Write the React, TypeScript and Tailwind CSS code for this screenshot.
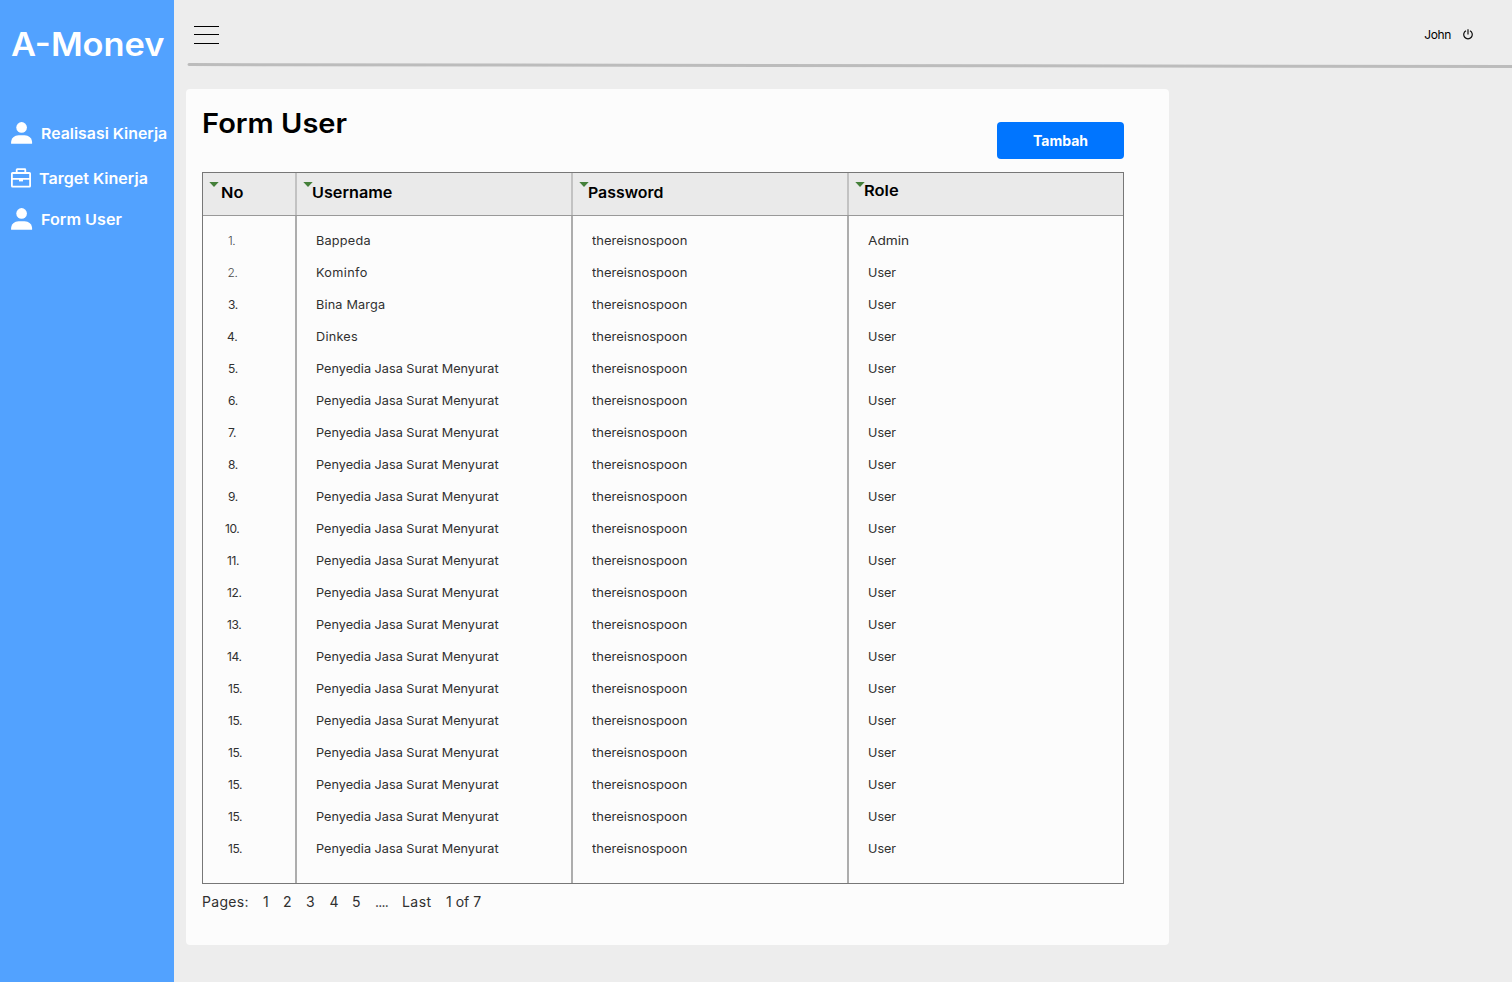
type Row = { no: string; noClass: string; username: string; nameClass: string; role: string };

const OFFICE = "Penyedia Jasa Surat Menyurat";
const DARK = "text-[#303030] font-[440]";
const LIGHT = "text-[#4a4a4a] font-[330]";

const rows: Row[] = [
  { no: "1.", noClass: `pl-[25px] tracking-[-0.5px] ${LIGHT}`, username: "Bappeda", nameClass: "tracking-[0.2px]", role: "Admin" },
  { no: "2.", noClass: `pl-[24.5px] tracking-[-0.3px] ${LIGHT}`, username: "Kominfo", nameClass: "tracking-[0.32px]", role: "User" },
  { no: "3.", noClass: `pl-[25px] tracking-[-0.3px] ${DARK}`, username: "Bina Marga", nameClass: "tracking-[0.15px]", role: "User" },
  { no: "4.", noClass: `pl-[24px] tracking-[-0.2px] ${DARK}`, username: "Dinkes", nameClass: "tracking-[0.22px]", role: "User" },
  ...["5.", "6.", "7.", "8.", "9."].map((no) => ({
    no,
    noClass: `pl-[25px] tracking-[-0.3px] ${DARK}`,
    username: OFFICE,
    nameClass: "tracking-[0]",
    role: "User",
  })),
  ...["10.", "11.", "12.", "13.", "14."].map((no) => ({
    no,
    noClass: `${no === "10." ? "pl-[22px]" : "pl-[24px]"} tracking-[-0.4px] ${DARK}`,
    username: OFFICE,
    nameClass: "tracking-[0]",
    role: "User",
  })),
  ...Array.from({ length: 6 }, () => ({
    no: "15.",
    noClass: `pl-[25px] tracking-[-0.4px] ${DARK}`,
    username: OFFICE,
    nameClass: "tracking-[0]",
    role: "User",
  })),
];

function PersonIcon() {
  return (
    <svg width="22" height="22" viewBox="0 0 22 22" fill="#fff" className="shrink-0">
      <circle cx="10.6" cy="5.4" r="5.3" />
      <path d="M0.1 21.8v-1.4c0-4.1 3.4-7.2 7.6-7.2h5.8c4.2 0 7.6 3.1 7.6 7.2v1.4z" />
    </svg>
  );
}

function BriefcaseIcon() {
  return (
    <svg width="20" height="20" viewBox="0 0 20 20" fill="none" stroke="#fff" strokeWidth="1.8" className="shrink-0">
      <rect x="0.9" y="5" width="18.2" height="13.7" rx="0.6" />
      <path d="M5.7 4.8V1.7q0-.5.5-.5h7.6q.5 0 .5.5v3.1M0.9 10.8h18.2" />
      <path d="M8 10.8h4v2.6H8z" fill="#fff" stroke="none" />
    </svg>
  );
}

function PowerIcon() {
  return (
    <svg width="10" height="11" viewBox="0 0 10 11" fill="none" stroke="#111" strokeWidth="1.2" className="-mt-[1px] ml-[12px]">
      <path d="M3 1.8a4.25 4.25 0 1 0 4 0M5 0.2v5.2" />
    </svg>
  );
}

function HeaderCell({ label, className }: { label: string; className: string }) {
  return (
    <div className="flex h-full items-start border-r-2 border-[#c2c2c2] last:border-r-0">
      <svg width="10" height="5" viewBox="0 0 10 5" className="mt-[9px] ml-[6px] shrink-0">
        <path d="M0.3 0h9.4L5 5z" fill="#45803a" />
      </svg>
      <span className={`origin-left text-[15px] leading-5 font-[580] text-black ${className}`}>{label}</span>
    </div>
  );
}

const COLUMNS = "grid grid-cols-[94px_276px_276px_274px]";

export default function App() {
  return (
    <div className="flex h-[982px] w-[1512px] overflow-hidden bg-[#ededed] font-['Inter',sans-serif]">
      <aside className="flex w-[174px] shrink-0 flex-col bg-[#52a2ff] whitespace-nowrap text-white">
        <h1 className="mt-[25px] ml-[10.5px] w-[144px] origin-left scale-x-[1.075] text-[32px] leading-10 font-[580]">A-Monev</h1>
        <nav className="mt-[57px] flex flex-col text-[15px] leading-[22px] font-[580]">
          <a className="flex h-[22px] items-center pl-[11px]">
            <PersonIcon />
            <span className="mt-[2px] ml-[8px] origin-left scale-x-[1.058]">Realisasi Kinerja</span>
          </a>
          <a className="mt-[23px] flex h-[22px] items-center pl-[11px]">
            <BriefcaseIcon />
            <span className="mt-[2px] ml-[7.5px] origin-left scale-x-[1.07]">Target Kinerja</span>
          </a>
          <a className="mt-[19px] flex h-[22px] items-center pl-[11px]">
            <PersonIcon />
            <span className="mt-[2px] ml-[8px] origin-left scale-x-[1.08]">Form User</span>
          </a>
        </nav>
      </aside>

      <div className="flex flex-1 flex-col">
        <header className="flex h-[63px] items-start justify-between pr-[39px] pl-5">
          <button className="mt-[26px] flex w-[25px] flex-col" aria-label="Menu">
            <span className="h-px w-full bg-black" />
            <span className="mt-[7px] h-px w-full bg-black" />
            <span className="mt-[8px] h-px w-full bg-black" />
          </button>
          <div className="mt-[25px] flex h-5 items-center text-[12px] text-black">
            <span className="tracking-[-0.35px]">John</span>
            <PowerIcon />
          </div>
        </header>
        <svg width="1325" height="6" viewBox="0 0 1325 6" className="ml-[13px] shrink-0">
          <path d="M2 1.6L1325 3.6" stroke="#bcbcbc" strokeWidth="3" strokeLinecap="round" />
        </svg>

        <main className="mt-5 ml-3 flex h-[856px] w-[983px] flex-col rounded-[4px] bg-[#fcfcfc] pr-[45px] pl-4">
          <div className="flex h-[83px] items-start justify-between">
            <h2 className="mt-[17px] origin-left scale-x-[1.075] text-[27px] leading-9 font-[580] text-black">Form User</h2>
            <button className="mt-[33px] h-[37px] w-[127px] rounded-[4px] bg-[#0075ff] text-[14px] font-bold text-white">
              Tambah
            </button>
          </div>

          <section className="flex h-[712px] w-[922px] flex-col border border-[#777777]">
            <div className={`${COLUMNS} h-[43px] border-b border-[#999999] bg-[#eaeaea]`}>
              <HeaderCell label="No" className="mt-[10px] ml-[2px] scale-x-[1.09]" />
              <HeaderCell label="Username" className="mt-[10px] -ml-[1px] scale-x-[1.08]" />
              <HeaderCell label="Password" className="mt-[10px] -ml-[1px] scale-x-[1.06]" />
              <HeaderCell label="Role" className="mt-[8px] -ml-[1px] scale-x-[1.1]" />
            </div>
            <div className={`${COLUMNS} flex-1 text-[12px] leading-8 whitespace-nowrap`}>
              <div className="border-r-2 border-[#adadad] pt-[9px]">
                {rows.map((row, i) => (
                  <div key={i} className={`h-8 ${row.noClass}`}>{row.no}</div>
                ))}
              </div>
              <div className={`border-r-2 border-[#adadad] pt-[9px] pl-[18.5px] ${DARK}`}>
                {rows.map((row, i) => (
                  <div key={i} className={`h-8 w-fit origin-left scale-x-[1.058] ${row.nameClass}`}>{row.username}</div>
                ))}
              </div>
              <div className={`border-r-2 border-[#adadad] pt-[9px] pl-[18.5px] ${DARK}`}>
                {rows.map((_, i) => (
                  <div key={i} className="h-8 w-fit origin-left scale-x-[1.083]">thereisnospoon</div>
                ))}
              </div>
              <div className={`pt-[9px] pl-[18.5px] ${DARK}`}>
                {rows.map((row, i) => (
                  <div key={i} className={`h-8 w-fit origin-left ${row.role === "Admin" ? "scale-x-[1.14]" : "scale-x-[1.05]"}`}>{row.role}</div>
                ))}
              </div>
            </div>
          </section>

          <footer className="mt-2 flex h-5 items-center text-[14px] leading-5 font-[430] whitespace-nowrap text-[#303030]">
            <span className="w-[61px] tracking-[0.3px]">Pages:</span>
            <span className="w-[20px]">1</span>
            <span className="w-[23px]">2</span>
            <span className="w-[23.5px]">3</span>
            <span className="w-[22.5px]">4</span>
            <span className="w-[23px]">5</span>
            <span className="w-[27px] tracking-[-0.8px]">....</span>
            <span className="w-[44px] tracking-[0.45px]">Last</span>
            <span>1 of 7</span>
          </footer>
        </main>
      </div>
    </div>
  );
}
